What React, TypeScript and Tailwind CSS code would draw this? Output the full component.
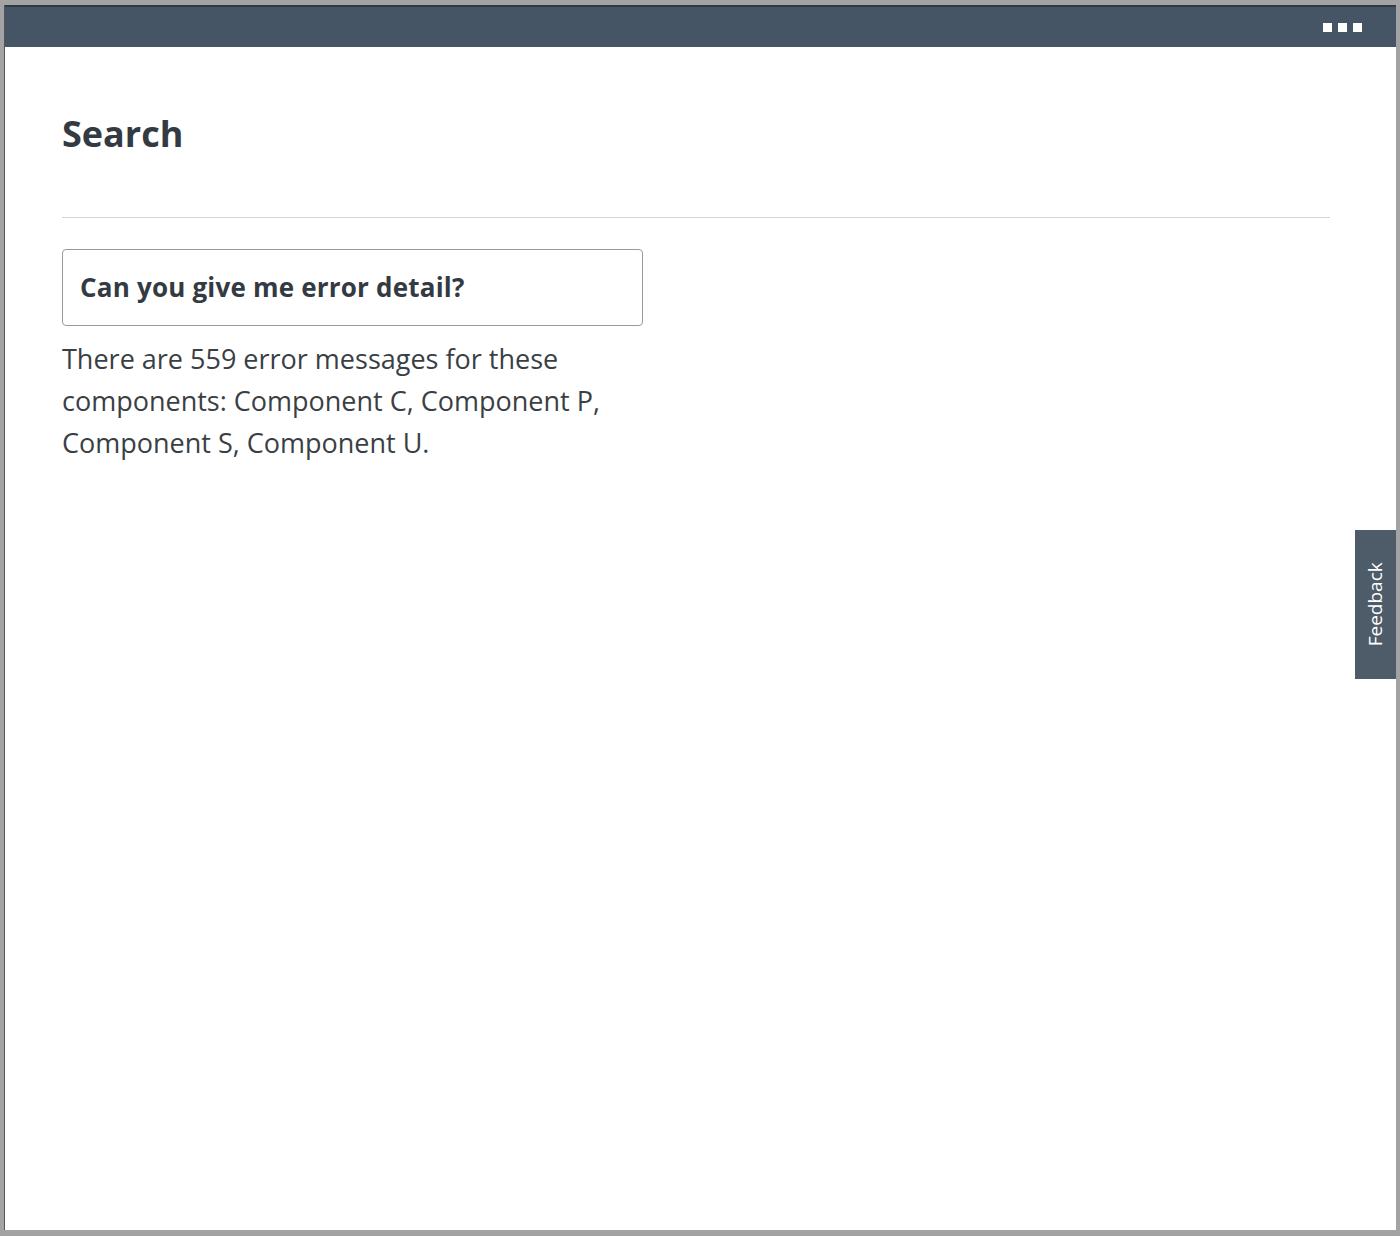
import React from 'react';

const font = { fontFamily: '"Open Sans", "Noto Sans", Arial, sans-serif' };

export default function App() {
  return (
    <div className="h-[1236px] w-[1400px] bg-[#a3a3a3] px-[4px] pt-[5px] pb-[6px]" style={font}>
      <div className="relative flex h-full flex-col bg-white border-l border-[#555]">
        <div className="flex h-[42px] items-center justify-end gap-[6px] border-t-2 border-[#2f3a45] bg-[#455565] pr-[34px]">
          <span className="h-[9px] w-[9px] bg-white" />
          <span className="h-[9px] w-[9px] bg-white" />
          <span className="h-[9px] w-[9px] bg-white" />
        </div>
        <div className="flex-1 pl-[57px] pr-[66px] pt-[64px]">
          <h1 className="text-[36px] font-bold leading-[46px] text-[#333a42]">Search</h1>
          <div className="mt-[60px] border-t border-[#d6d6d6]" />
          <div className="mt-[31px] flex h-[77px] w-[581px] items-center rounded-[4px] border border-[#9a9a9a] px-[17px]">
            <span className="text-[26px] font-bold tracking-[0.2px] text-[#333a42]">Can you give me error detail?</span>
          </div>
          <p className="mt-[12px] w-[580px] text-[27px] leading-[42px] text-[#3a3f45]">
            There are 559 error messages for these components: Component C, Component P, Component S, Component U.
          </p>
        </div>
        <div className="absolute right-0 top-[525px] flex h-[149px] w-[41px] items-center justify-center bg-[#4e5b69]">
          <span className="-rotate-90 whitespace-nowrap text-[19px] text-white">Feedback</span>
        </div>
      </div>
    </div>
  );
}
